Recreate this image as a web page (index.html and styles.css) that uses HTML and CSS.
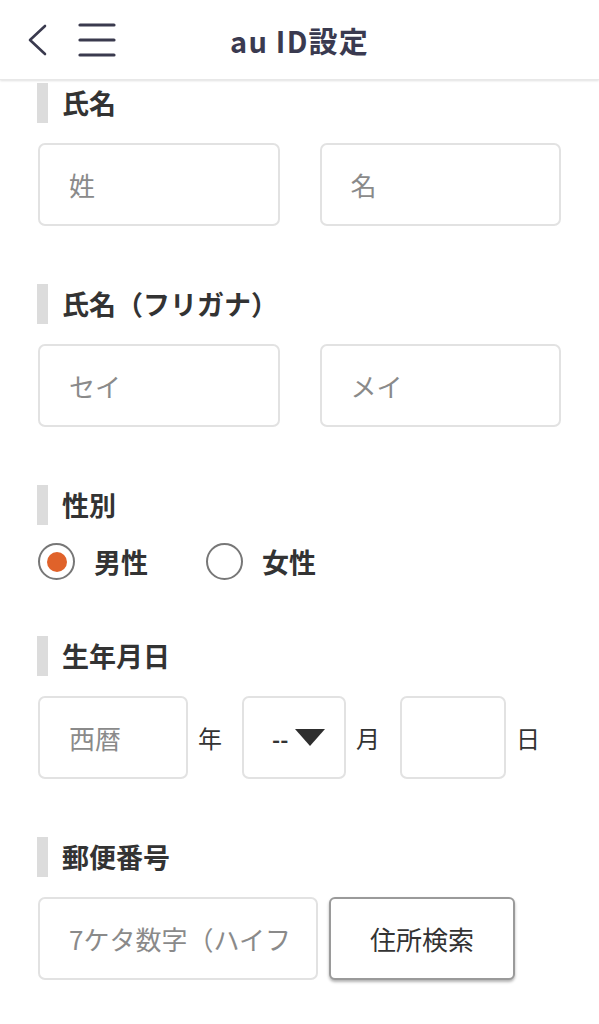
FILE: index.html
```html
<!DOCTYPE html>
<html lang="ja">
<head>
<meta charset="utf-8">
<title>au ID設定</title>
<link rel="stylesheet" href="styles.css">
</head>
<body>
<header class="topbar">
  <div class="nav-left">
    <svg class="icon-back" width="24" height="34" viewBox="0 0 24 34"><polyline points="19,3 4,17 19,31" fill="none" stroke="#3a3a4e" stroke-width="2.6" stroke-linecap="round" stroke-linejoin="round"/></svg>
    <svg class="icon-menu" width="38" height="34" viewBox="0 0 38 34"><g stroke="#3a3a4e" stroke-width="3.2" stroke-linecap="round"><line x1="2" y1="2" x2="36" y2="2"/><line x1="2" y1="17" x2="36" y2="17"/><line x1="2" y1="32" x2="36" y2="32"/></g></svg>
  </div>
  <h1 class="title">au ID設定</h1>
  <div class="nav-right"></div>
</header>
<main class="form">
  <section class="field">
    <div class="label">氏名</div>
    <div class="row two">
      <input class="box" placeholder="姓">
      <input class="box" placeholder="名">
    </div>
  </section>
  <section class="field">
    <div class="label">氏名（フリガナ）</div>
    <div class="row two">
      <input class="box" placeholder="セイ">
      <input class="box" placeholder="メイ">
    </div>
  </section>
  <section class="field gender">
    <div class="label">性別</div>
    <div class="radios">
      <label class="radio"><span class="circle on"></span><span class="rtext">男性</span></label>
      <label class="radio"><span class="circle"></span><span class="rtext">女性</span></label>
    </div>
  </section>
  <section class="field">
    <div class="label">生年月日</div>
    <div class="row birth">
      <input class="box year" placeholder="西暦">
      <span class="unit">年</span>
      <div class="box month"><span class="dash">--</span><svg width="30" height="17" viewBox="0 0 30 17"><polygon points="0,0 30,0 15,17" fill="#2e2e2e"/></svg></div>
      <span class="unit">月</span>
      <input class="box day">
      <span class="unit">日</span>
    </div>
  </section>
  <section class="field">
    <div class="label">郵便番号</div>
    <div class="row zip">
      <input class="box zipcode" placeholder="7ケタ数字（ハイフン無し）">
      <button class="search">住所検索</button>
    </div>
  </section>
</main>
</body>
</html>
```
FILE: styles.css
```css
* { box-sizing: border-box; }
body {
  margin: 0;
  background: #fff;
  font-family: "Noto Sans CJK JP", "Noto Sans", sans-serif;
  color: #333;
}
.topbar {
  height: 80px;
  display: grid;
  grid-template-columns: 1fr auto 1fr;
  align-items: center;
  background: #fff;
  box-shadow: 0 1px 2px rgba(0,0,0,0.12);
  border-bottom: 1px solid #e8e8e8;
}
.nav-left {
  display: flex;
  align-items: center;
  gap: 28px;
  padding-left: 26px;
}
.icon-back, .icon-menu { display: block; }
.title {
  margin: 0;
  font-size: 29px;
  font-weight: 700;
  color: #3a3a50;
  letter-spacing: 1.2px;
}
.form {
  padding: 3px 38px 0 37px;
}
.field {
  margin-bottom: 58px;
}
.field.gender { margin-bottom: 55px; }
.label {
  height: 40px;
  line-height: 40px;
  border-left: 11px solid #dcdcdc;
  padding-left: 14px;
  font-size: 27px;
  font-weight: 700;
  color: #333;
}
.row {
  margin-top: 20px;
  display: flex;
  align-items: center;
}
.row.two { gap: 39px; }
.box {
  flex: none;
  height: 83px;
  border: 2px solid #e2e2e2;
  border-radius: 7px;
  background: #fff;
  font-family: inherit;
  font-size: 26px;
  color: #333;
  padding: 0 0 0 29px;
  outline: none;
  min-width: 0;
}
.box::placeholder { color: #8a8a8a; }
.row.two .box { flex: 1; margin-left: 1px; }
.birth .year { width: 150px; margin-left: 1px; }
.birth .unit {
  flex: none;
  font-size: 24px;
  color: #333;
  margin: 0 20px 0 10px;
}
.birth .month {
  width: 104px;
  display: flex;
  align-items: center;
  padding-left: 28px;
  gap: 7px;
}
.dash { font-size: 22px; font-weight: 700; color: #333; }
.birth .day { width: 106px; }
.zip { gap: 11px; }
.zipcode { width: 280px; margin-left: 1px; padding-right: 26px; }
.search {
  flex: none;
  width: 186px;
  height: 83px;
  background: #fff;
  border: 2px solid #9a9a9a;
  border-radius: 6px;
  box-shadow: 0 2px 3px rgba(0,0,0,0.3);
  font-family: inherit;
  font-size: 26px;
  color: #333;
}
.radios {
  margin-top: 17px;
  display: flex;
  align-items: center;
  gap: 58px;
  padding-left: 1px;
}
.radio {
  display: flex;
  align-items: center;
  gap: 19px;
}
.circle {
  width: 37px;
  height: 37px;
  border: 2px solid #777;
  border-radius: 50%;
  display: flex;
  align-items: center;
  justify-content: center;
}
.circle.on::after {
  content: "";
  width: 20px;
  height: 20px;
  border-radius: 50%;
  background: #e0622a;
}
.rtext {
  font-size: 27px;
  font-weight: 700;
  color: #333;
}
```
